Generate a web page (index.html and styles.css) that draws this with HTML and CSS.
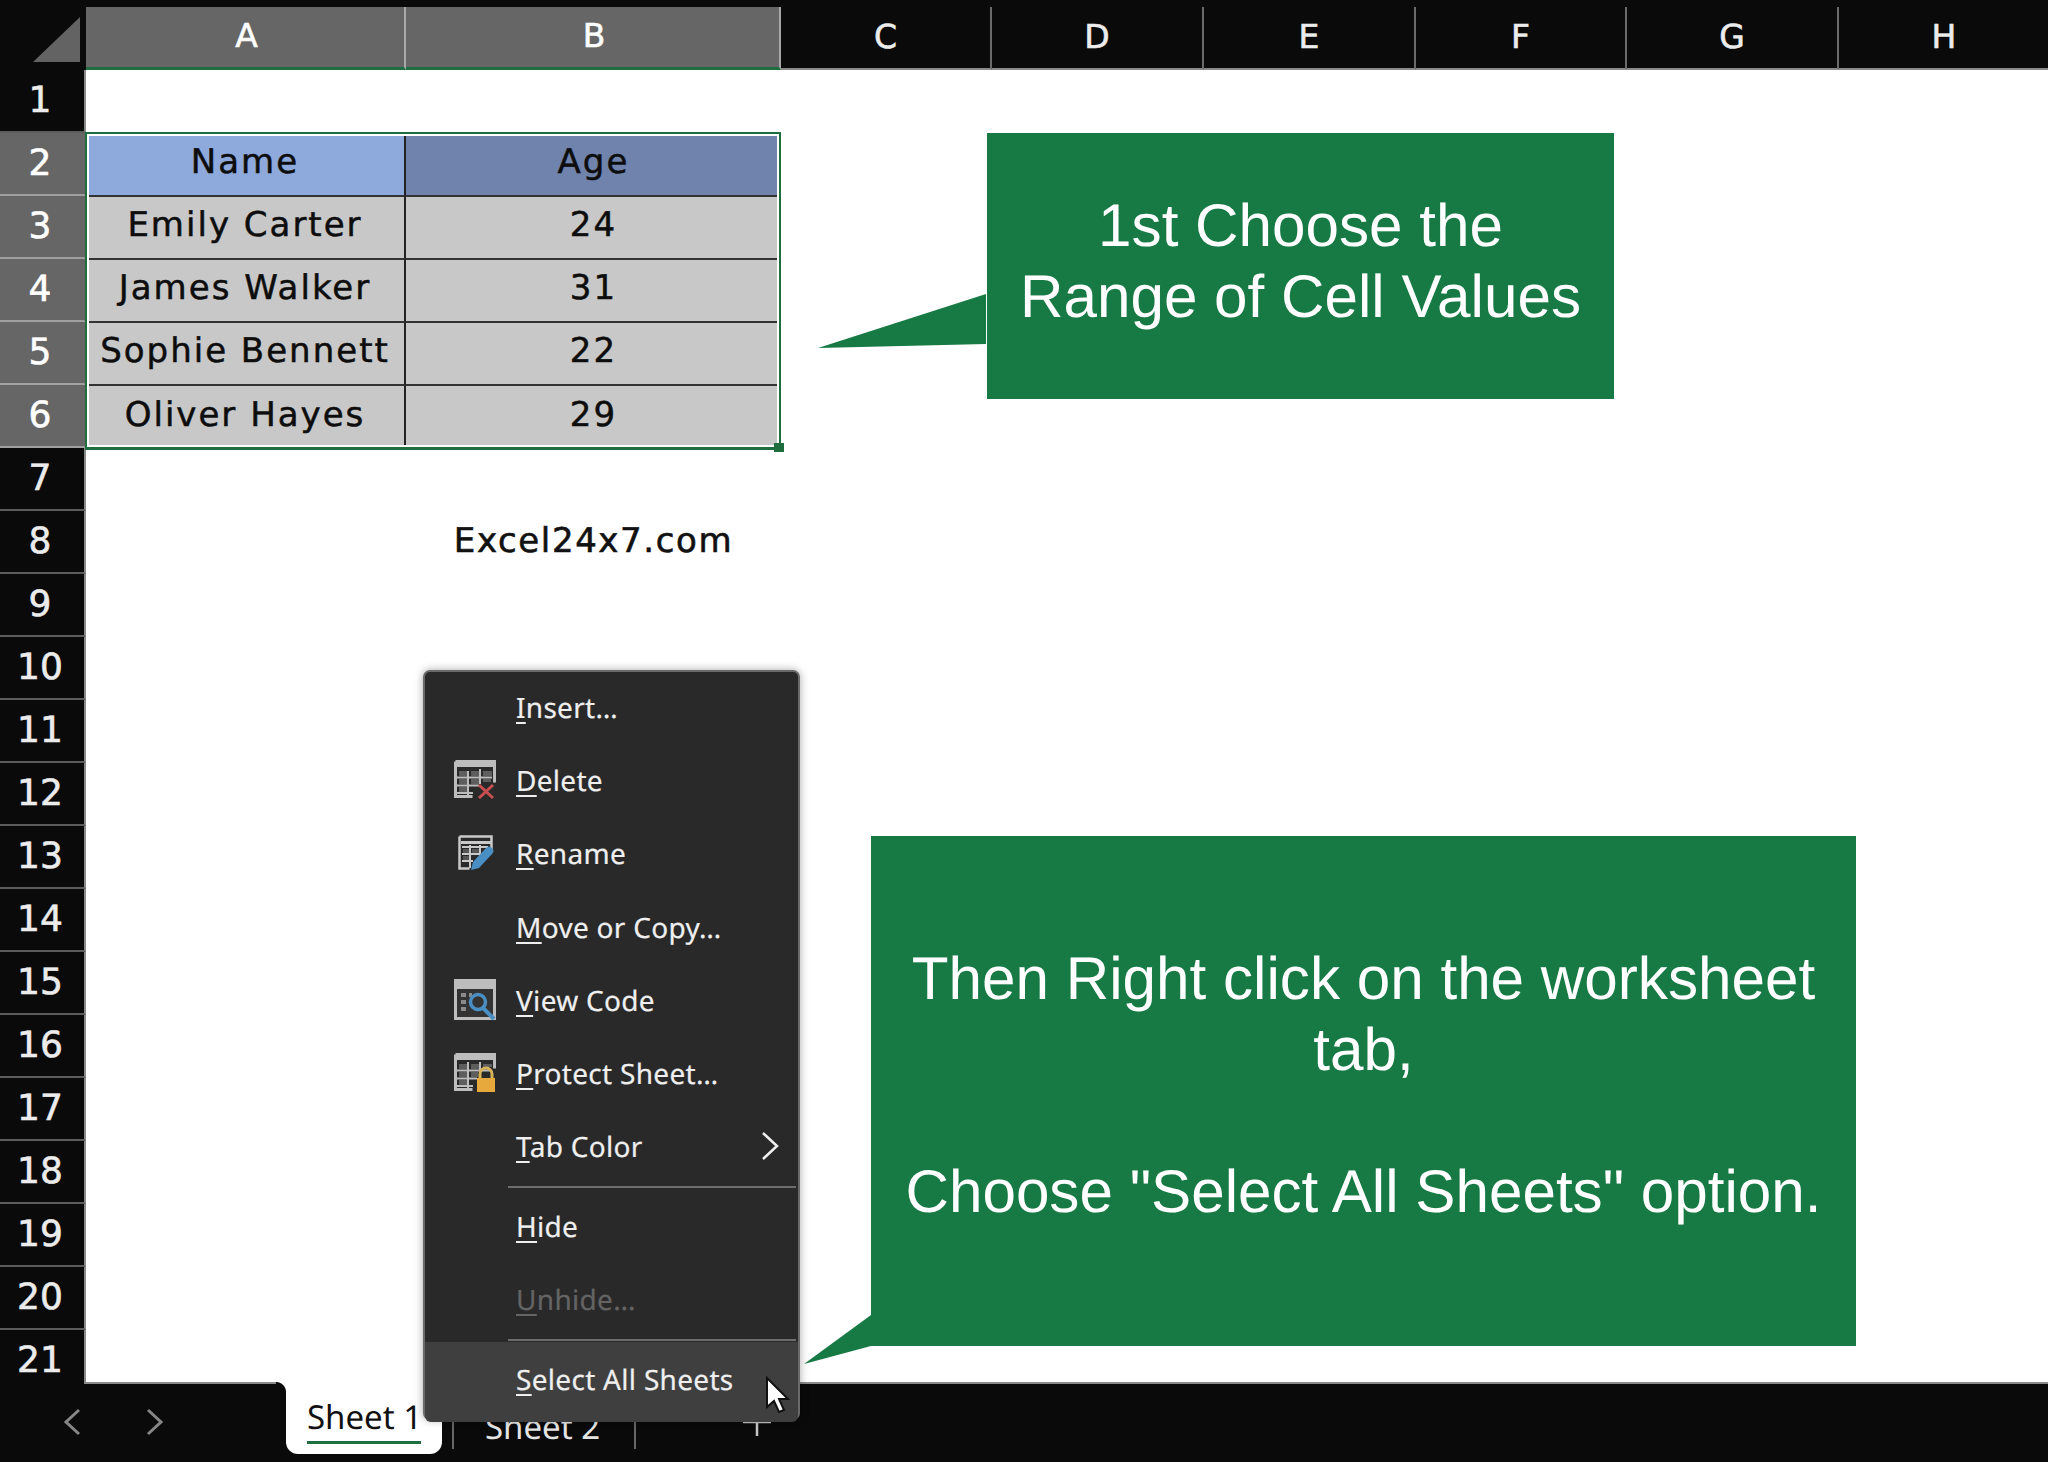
FILE: index.html
```html
<!DOCTYPE html>
<html lang="en">
<head>
<meta charset="utf-8">
<title>Select All Sheets</title>
<link rel="stylesheet" href="styles.css">
</head>
<body>
<div class="app">
  <div class="colbar">
    <div class="corner"><svg width="86" height="69" viewBox="0 0 86 69"><polygon points="33,62 80,62 80,17" fill="#636363"/></svg></div>
    <div class="colhead sel w-a">A</div>
    <div class="colhead sel w-b">B</div>
    <div class="colhead w-c">C</div>
    <div class="colhead w-d">D</div>
    <div class="colhead w-d">E</div>
    <div class="colhead w-f">F</div>
    <div class="colhead w-d">G</div>
    <div class="colhead w-h last">H</div>
  </div>
  <div class="body">
    <div class="rowheads">
      <div class="rowhead">1</div>
      <div class="rowhead sel">2</div>
      <div class="rowhead sel">3</div>
      <div class="rowhead sel">4</div>
      <div class="rowhead sel">5</div>
      <div class="rowhead sel">6</div>
      <div class="rowhead">7</div>
      <div class="rowhead">8</div>
      <div class="rowhead">9</div>
      <div class="rowhead">10</div>
      <div class="rowhead">11</div>
      <div class="rowhead">12</div>
      <div class="rowhead">13</div>
      <div class="rowhead">14</div>
      <div class="rowhead">15</div>
      <div class="rowhead">16</div>
      <div class="rowhead">17</div>
      <div class="rowhead">18</div>
      <div class="rowhead">19</div>
      <div class="rowhead">20</div>
      <div class="rowhead clip">21</div>
    </div>
    <div class="sheet">
      <div class="cells">
        <div class="cell hd1 r2">Name</div><div class="cell hd2 r2">Age</div>
        <div class="cell">Emily Carter</div><div class="cell">24</div>
        <div class="cell">James Walker</div><div class="cell">31</div>
        <div class="cell">Sophie Bennett</div><div class="cell">22</div>
        <div class="cell end">Oliver Hayes</div><div class="cell end">29</div>
        <div class="note">Excel24x7.com</div>
      </div>
      <div class="selection"><span class="handle"></span></div>

      <div class="callout callout-one">
        <svg class="tail" width="170" height="60" viewBox="0 0 170 60"><polygon points="168,0 168,50 0,54" fill="#177a45"/></svg>
        <p>1st Choose the<br>Range of Cell Values</p>
      </div>
      <div class="callout callout-two">
        <svg class="tail" width="70" height="52" viewBox="0 0 70 52"><polygon points="68,0 68,31 1,49" fill="#177a45"/></svg>
        <p>Then Right click on the worksheet<br>tab,<br><br>Choose "Select All Sheets" option.</p>
      </div>
    </div>
  </div>
  <div class="tabbar">
    <div class="navs">
      <svg width="18" height="28" viewBox="0 0 18 28"><path d="M16 2 3 14l13 12" fill="none" stroke="#868686" stroke-width="3"/></svg>
      <svg width="18" height="28" viewBox="0 0 18 28"><path d="M2 2l13 12L2 26" fill="none" stroke="#868686" stroke-width="3"/></svg>
    </div>
    <div class="tab active"><span class="tab-label">Sheet 1</span></div>
    <div class="tab second"><span>Sheet 2</span></div>
    <div class="plus"><svg width="30" height="30" viewBox="0 0 30 30"><path d="M15 1v28M1 15h28" stroke="#c4c4c4" stroke-width="2.5"/></svg></div>
  </div>

  <div class="menu">
    <div class="item first"><span class="label"><u>I</u>nsert…</span></div>
    <div class="item">
      <svg class="icon" width="42" height="40" viewBox="0 0 42 40">
        <path d="M1.500 1.500h39v21M1.500 1.500v35h17" fill="none" stroke="#bdbdbd" stroke-width="3"/>
        <rect x="3" y="3" width="36" height="4" fill="#bdbdbd"/>
        <path d="M5 11h9v5H5zM17 11h9v5h-9zM29 11h9v5h-9zM5 19h9v5H5zM17 19h9v5h-9zM29 19h8v3h-8zM5 27h9v5H5z" fill="#5e5e5e"/>
        <path d="M14 11v26M26 9v15M3 17.500h35M3 25.500h22M3 33h16" stroke="#bdbdbd" stroke-width="2"/>
        <path d="M25 25l14 13M39 25 25 38" stroke="#c84f4f" stroke-width="3"/>
      </svg>
      <span class="label"><u>D</u>elete</span>
    </div>
    <div class="item">
      <svg class="icon icon-small" width="36" height="36" viewBox="0 0 36 36">
        <path d="M1.500 1.500h32v15M1.500 1.500v32h10" fill="none" stroke="#c9c9c9" stroke-width="2.500"/>
        <rect x="3" y="6" width="30" height="3" fill="#c9c9c9"/>
        <path d="M4 12h26M4 19h18M4 26h11M12 10v23M22 10v12" stroke="#c9c9c9" stroke-width="2"/>
        <path d="M5 14h6v4H5zM14 14h7v4h-7zM5 21h6v4H5z" fill="#555"/>
        <path d="M13 35l2-8L28 13c2-2 4-2 6 0s2 4 0 6L21 33z" fill="#4a8fc4"/>
      </svg>
      <span class="label"><u>R</u>ename</span>
    </div>
    <div class="item"><span class="label"><u>M</u>ove or Copy…</span></div>
    <div class="item">
      <svg class="icon" width="42" height="42" viewBox="0 0 42 42">
        <rect x="1.500" y="1.500" width="39" height="38" fill="#333" stroke="#bdbdbd" stroke-width="3"/>
        <rect x="3" y="3" width="36" height="7" fill="#bdbdbd"/>
        <path d="M7 14h5v4H7zM7 21h5v4H7zM7 28h5v4H7zM15 14h3v4h-3z" fill="#8a8a8a"/>
        <circle cx="24" cy="23" r="7.500" fill="none" stroke="#4a8fc4" stroke-width="3.500"/>
        <path d="M29 29l11 11" stroke="#4a8fc4" stroke-width="4"/>
      </svg>
      <span class="label"><u>V</u>iew Code</span>
    </div>
    <div class="item">
      <svg class="icon" width="42" height="40" viewBox="0 0 42 40">
        <path d="M1.500 1.500h39v14M1.500 1.500v35h17" fill="none" stroke="#bdbdbd" stroke-width="3"/>
        <rect x="3" y="3" width="36" height="4" fill="#bdbdbd"/>
        <path d="M5 11h9v5H5zM17 11h9v5h-9zM29 11h9v3h-9zM5 19h9v5H5zM17 19h7v5h-7zM5 27h9v5H5z" fill="#5e5e5e"/>
        <path d="M14 9v28M26 9v15M3 17.500h35M3 25.500h20M3 33h16" stroke="#bdbdbd" stroke-width="2"/>
        <path d="M26 25v-4a6 6 0 0 1 12 0v4" fill="none" stroke="#d9b25c" stroke-width="3"/>
        <rect x="23" y="25" width="18" height="14" fill="#e8a93c"/>
      </svg>
      <span class="label"><u>P</u>rotect Sheet…</span>
    </div>
    <div class="item">
      <span class="label"><u>T</u>ab Color</span>
      <svg class="chevron" width="18" height="28" viewBox="0 0 18 28"><path d="M2 1l14 13L2 27" fill="none" stroke="#f0f0f0" stroke-width="2.500"/></svg>
    </div>
    <div class="sep"></div>
    <div class="item"><span class="label"><u>H</u>ide</span></div>
    <div class="item disabled"><span class="label"><u>U</u>nhide…</span></div>
    <div class="sep sep-two"></div>
    <div class="item hover"><span class="label"><u>S</u>elect All Sheets</span></div>
    <svg class="cursor" width="26" height="38" viewBox="0 0 26 38"><path d="M2 2v29l7-6 5 11 5-2-5-11h9z" fill="#fff" stroke="#111" stroke-width="2"/></svg>
  </div>
</div>
</body>
</html>
```

FILE: styles.css
```css
* { box-sizing: border-box; }
html, body { margin: 0; padding: 0; }
body { background: #0a0a0a; font-family: "DejaVu Sans", "Liberation Sans", sans-serif; text-rendering: geometricPrecision; }
.app { position: relative; width: 2048px; height: 1462px; overflow: hidden; display: flex; flex-direction: column; background: #0a0a0a; }

.colbar { display: flex; height: 70px; flex: none; }
.corner { width: 86px; height: 69px; flex: none; }
.corner svg { display: block; }
.colhead { height: 63px; margin-top: 7px; padding-bottom: 3px; display: flex; align-items: center; justify-content: center; color: #ececec; font-size: 33px; -webkit-text-stroke: .6px currentColor; border-right: 2px solid #6a6a6a; border-bottom: 2px solid #8a8a8a; flex: none; }
.colhead.sel { background: #666; color: #fff; border-right-color: #a8a8a8; border-bottom: 3px solid #1e6e40; padding-left: 3px; }
.colhead.last { border-right: 0; }
.w-a { width: 320px; }
.w-b { width: 375px; }
.w-c { width: 211px; }
.w-d { width: 212px; }
.w-f { width: 211px; }
.w-h { width: 210px; }

.body { display: flex; height: 1314px; flex: none; }
.rowheads { width: 86px; flex: none; }
.rowhead { height: 63px; padding-right: 4px; display: flex; align-items: center; justify-content: center; color: #ececec; font-size: 36px; -webkit-text-stroke: .6px currentColor; border-bottom: 2px solid #5c5c5c; border-right: 2px solid #8a8a8a; }
.rowhead.sel { background: #666; color: #fff; border-bottom-color: #a0a0a0; border-right-color: #666; }
.rowhead.clip { height: 54px; padding-top: 6px; border-bottom: 0; }

.sheet { position: relative; flex: 1; background: #fff; border-bottom: 2px solid #8a8a8a; }
.cells { display: grid; grid-template-columns: 320px 375px; grid-auto-rows: 63px; padding-top: 64px; }
.cell { display: flex; align-items: center; justify-content: center; padding-bottom: 5px; background: #c8c8c8; color: #0d0d0d; font-size: 34px; letter-spacing: 2px; -webkit-text-stroke: .5px currentColor; border-bottom: 2px solid #333; white-space: nowrap; }
.cell:nth-child(2n+1) { border-right: 2px solid #222; }
.cell.hd1 { background: #8ea9db; }
.cell.hd2 { background: #6f83ad; }
.cell.end { border-bottom: 0; }
.note { grid-column: 2; grid-row: 7; display: flex; align-items: center; justify-content: center; padding-bottom: 6px; color: #111; font-size: 34px; letter-spacing: 1.6px; -webkit-text-stroke: .6px currentColor; }

.selection { position: absolute; left: -1px; top: 62px; width: 696px; height: 318px; border: 2px solid #1e6e40; border-bottom-width: 3px; box-shadow: inset 0 0 0 2px #fff; }
.handle { position: absolute; right: -5px; bottom: -5px; width: 10px; height: 9px; background: #1e6e40; }

.callout { position: absolute; background: #177a45; color: #fff; font-family: "Liberation Sans", Arial, sans-serif; font-size: 60.2px; line-height: 71px; text-align: center; display: flex; align-items: center; justify-content: center; }
.callout p { margin: 0; }
.tail { position: absolute; display: block; }
.callout-one { left: 901px; top: 63px; width: 627px; height: 266px; padding-bottom: 11px; }
.callout-one .tail { left: -170px; top: 161px; width: 172px; }
.callout-two { left: 785px; top: 766px; width: 985px; height: 510px; padding-bottom: 12px; }
.callout-two .tail { left: -68px; top: 479px; }

.tabbar { flex: 1; display: flex; align-items: flex-start; position: relative; }
.navs { width: 276px; flex: none; display: flex; gap: 65px; padding: 24px 0 0 63px; }
.tab { font-family: "Noto Sans", sans-serif; font-size: 33px; }
.tab.active { position: relative; width: 156px; height: 72px; margin: -2px 0 0 10px; padding: 12px 0 0 21px; background: #fff; color: #111; border-radius: 0 0 12px 12px; }
.tab.active::before { content: ""; position: absolute; left: -10px; top: 0; width: 10px; height: 10px; background: radial-gradient(circle at 0 100%, #0a0a0a 9.500px, #fff 10.500px); }
.tab-label { display: inline-block; width: 114px; height: 50px; white-space: nowrap; border-bottom: 3px solid #1e6e40; }
.tab.second { width: 184px; height: 34px; margin: 31px 0 0 10px; padding: 0 0 0 31px; color: #e4e4e4; line-height: 24px; border-left: 2px solid #666; border-right: 2px solid #666; }
.plus { margin: 23px 0 0 106px; }
.plus svg { display: block; }

.menu { position: absolute; left: 423px; top: 670px; width: 377px; height: 750px; padding: 0 2px 2px; background: #292929; border: 2px solid #6a6a6a; border-radius: 7px; box-shadow: 0 0 8px rgba(0,0,0,.35); font-family: "Noto Sans", sans-serif; font-size: 28px; letter-spacing: .3px; -webkit-text-stroke: .2px currentColor; color: #efefef; display: flex; flex-direction: column; overflow: visible; }
.item { position: relative; height: 73.300px; flex: none; display: flex; align-items: center; padding-left: 89px; }
.item.first { margin-top: -1px; }
.item .label { white-space: nowrap; }
.item u { text-decoration-thickness: 2px; text-underline-offset: 4px; }
.icon { position: absolute; left: 27px; top: calc(50% - 1px); transform: translateY(-50%); display: block; }
.icon-small { left: 31px; }
.chevron { position: absolute; right: 17px; top: 21px; }
.sep { height: 2px; flex: none; margin: 2px 0 2px 81px; background: #6d6d6d; }
.sep-two { margin-bottom: 1px; }
.disabled { color: #646464; }
.hover { background: #3f3f3f; margin: 0 -2px -2px; padding: 0 0 3px 91px; border-radius: 0 0 6px 6px; height: 80px; }
.cursor { position: absolute; left: 340px; top: 704px; display: block; }
```
